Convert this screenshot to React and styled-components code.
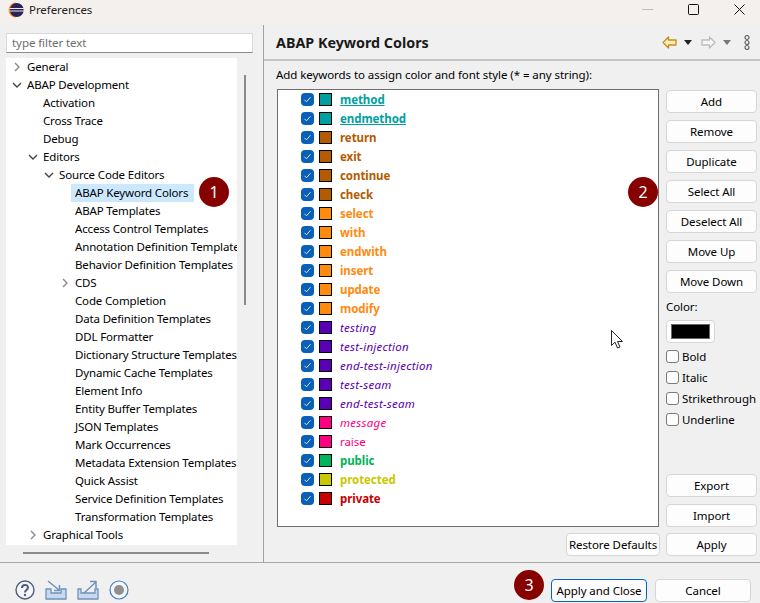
import styled, { createGlobalStyle } from "styled-components";

const GlobalStyle = createGlobalStyle`
  html, body {
    margin: 0;
    padding: 0;
    background: #f0f0f0;
  }
  * {
    box-sizing: border-box;
  }
`;

const tree = [
  { label: "General", level: 0, arrow: "closed" },
  { label: "ABAP Development", level: 0, arrow: "open" },
  { label: "Activation", level: 1 },
  { label: "Cross Trace", level: 1 },
  { label: "Debug", level: 1 },
  { label: "Editors", level: 1, arrow: "open" },
  { label: "Source Code Editors", level: 2, arrow: "open" },
  { label: "ABAP Keyword Colors", level: 3, selected: true },
  { label: "ABAP Templates", level: 3 },
  { label: "Access Control Templates", level: 3 },
  { label: "Annotation Definition Templates", level: 3 },
  { label: "Behavior Definition Templates", level: 3 },
  { label: "CDS", level: 3, arrow: "closed" },
  { label: "Code Completion", level: 3 },
  { label: "Data Definition Templates", level: 3 },
  { label: "DDL Formatter", level: 3 },
  { label: "Dictionary Structure Templates", level: 3 },
  { label: "Dynamic Cache Templates", level: 3 },
  { label: "Element Info", level: 3 },
  { label: "Entity Buffer Templates", level: 3 },
  { label: "JSON Templates", level: 3 },
  { label: "Mark Occurrences", level: 3 },
  { label: "Metadata Extension Templates", level: 3 },
  { label: "Quick Assist", level: 3 },
  { label: "Service Definition Templates", level: 3 },
  { label: "Transformation Templates", level: 3 },
  { label: "Graphical Tools", level: 1, arrow: "closed" },
];

const TEAL = "#00a0a0";
const BROWN = "#b45a00";
const ORANGE = "#ff8a10";
const PURPLE = "#5a00b4";
const PINK = "#ff0080";

const keywords = [
  { word: "method", color: TEAL, bold: true, underline: true },
  { word: "endmethod", color: TEAL, bold: true, underline: true },
  { word: "return", color: BROWN, bold: true },
  { word: "exit", color: BROWN, bold: true },
  { word: "continue", color: BROWN, bold: true },
  { word: "check", color: BROWN, bold: true },
  { word: "select", color: ORANGE, bold: true },
  { word: "with", color: ORANGE, bold: true },
  { word: "endwith", color: ORANGE, bold: true },
  { word: "insert", color: ORANGE, bold: true },
  { word: "update", color: ORANGE, bold: true },
  { word: "modify", color: ORANGE, bold: true },
  { word: "testing", color: PURPLE, italic: true },
  { word: "test-injection", color: PURPLE, italic: true },
  { word: "end-test-injection", color: PURPLE, italic: true },
  { word: "test-seam", color: PURPLE, italic: true },
  { word: "end-test-seam", color: PURPLE, italic: true },
  { word: "message", color: PINK, italic: true },
  { word: "raise", color: PINK },
  { word: "public", color: "#00b45a", bold: true },
  { word: "protected", color: "#c8c800", bold: true },
  { word: "private", color: "#c80000", bold: true },
];

const topButtons = ["Add", "Remove", "Duplicate", "Select All", "Deselect All", "Move Up", "Move Down"];
const styleOptions = ["Bold", "Italic", "Strikethrough", "Underline"];

const Window = styled.div`
  position: relative;
  width: 760px;
  height: 603px;
  overflow: hidden;
  background: #f0f0f0;
  color: #000;
  font-family: "Noto Sans", "Open Sans", sans-serif;
  font-size: 11.5px;
  letter-spacing: -0.07px;
  display: flex;
  flex-direction: column;
`;

const TitleBar = styled.div`
  height: 25px;
  flex: none;
  background: #f3f0ee;
  display: flex;
  align-items: center;
  padding: 0 0 6px 8px;
  gap: 5px;
`;

const Title = styled.span`
  flex: 1;
  color: #222;
`;

const WindowButton = styled.div`
  width: 46px;
  height: 19px;
  margin-left: -5px;
  padding-right: 15px;
  display: flex;
  align-items: center;
  justify-content: flex-end;
`;

const Body = styled.div`
  height: 537px;
  flex: none;
  display: flex;
`;

const LeftPane = styled.div`
  width: 264px;
  flex: none;
  border-right: 1px solid #a0a0a0;
  padding: 8px 0 0 6px;
`;

const FilterInput = styled.div`
  width: 247px;
  height: 20px;
  background: #fff;
  border: 1px solid #d9d9d9;
  border-bottom-color: #8a8a8a;
  color: #6d6d6d;
  line-height: 17px;
  padding-left: 5px;
`;

const TreeArea = styled.div`
  margin-top: 5px;
  display: flex;
  height: 487px;
`;

const TreeList = styled.div`
  width: 231px;
  background: #fff;
  overflow: hidden;
  letter-spacing: -0.16px;
`;

const TreeRow = styled.div`
  height: 18px;
  display: flex;
  align-items: center;
  white-space: nowrap;
  padding-left: ${(p) => 6 + p.$level * 16}px;
`;

const ArrowSlot = styled.span`
  width: 15px;
  flex: none;
  display: flex;
  align-items: center;
`;

const TreeLabel = styled.span`
  padding: 0 ${(p) => (p.$selected ? 6 : 0)}px 0 ${(p) => (p.$selected ? 4 : 0)}px;
  margin-left: ${(p) => (p.$selected ? -4 : 0)}px;
  height: 18px;
  line-height: 17px;
  background: ${(p) => (p.$selected ? "#cce8ff" : "transparent")};
`;

const VerticalTrack = styled.div`
  width: 16px;
  display: flex;
  justify-content: center;
  padding-top: 17px;
`;

const VerticalThumb = styled.div`
  width: 2px;
  height: 230px;
  background: #8a8a8a;
`;

const HorizontalTrack = styled.div`
  width: 231px;
  padding: 7px 0 0 17px;
`;

const HorizontalThumb = styled.div`
  width: 186px;
  height: 2px;
  background: #8a8a8a;
`;

const RightPane = styled.div`
  flex: 1;
  display: flex;
  flex-direction: column;
`;

const PageHeader = styled.div`
  height: 36px;
  flex: none;
  border-bottom: 2px solid #c4c4c4;
  display: flex;
  align-items: center;
  padding: 0 10px 0 12px;
`;

const PageTitle = styled.h1`
  flex: 1;
  margin: 0;
  font-size: 14.3px;
  font-weight: 700;
  letter-spacing: 0;
  color: #1a1a1a;
`;

const HeaderIcons = styled.div`
  display: flex;
  align-items: center;
  gap: 7px;
`;

const Content = styled.div`
  flex: 1;
  padding: 5px 3px 0 12px;
`;

const Hint = styled.div`
  height: 23px;
  line-height: 18px;
`;

const Columns = styled.div`
  display: flex;
  gap: 7px;
  margin-left: 1px;
`;

const KeywordTable = styled.div`
  width: 382px;
  height: 438px;
  background: #fff;
  border: 1px solid #6e6e6e;
`;

const KeywordRow = styled.div`
  height: 19px;
  display: flex;
  align-items: center;
  padding-left: 23px;
`;

const CheckMark = styled.span`
  width: 13px;
  height: 13px;
  border-radius: 4px;
  background: #0a60b8;
  display: flex;
  align-items: center;
  justify-content: center;
  flex: none;
`;

const Swatch = styled.span`
  width: 13px;
  height: 13px;
  margin-left: 5px;
  border: 1px solid #000;
  background: ${(p) => p.$color};
  flex: none;
`;

const Keyword = styled.span`
  margin-left: 8px;
  color: ${(p) => p.$color};
  font-weight: ${(p) => (p.$bold ? 700 : 400)};
  font-style: ${(p) => (p.$italic ? "italic" : "normal")};
  letter-spacing: ${(p) => (p.$italic ? "0.25px" : "inherit")};
  text-decoration: ${(p) => (p.$underline ? "underline" : "none")};
`;

const SideColumn = styled.div`
  width: 91px;
  margin-top: 1px;
  height: 437px;
  display: flex;
  flex-direction: column;
`;

const ButtonStack = styled.div`
  display: flex;
  flex-direction: column;
  gap: 7px;
`;

const PushButton = styled.button`
  height: 23px;
  width: ${(p) => (p.$width ? `${p.$width}px` : "100%")};
  background: #fdfdfd;
  border: 1px solid ${(p) => (p.$primary ? "#0067c0" : "#d6d6d6")};
  border-radius: 4px;
  font: inherit;
  letter-spacing: inherit;
  white-space: nowrap;
  color: #000;
  padding: 0;
  flex: none;
`;

const ColorLabel = styled.div`
  margin-top: 4px;
  height: 20px;
  line-height: 20px;
`;

const ColorButton = styled.div`
  width: 49px;
  height: 23px;
  margin-top: 3px;
  background: #fdfdfd;
  border: 1px solid #d6d6d6;
  border-radius: 4px;
  display: flex;
  align-items: center;
  justify-content: center;
`;

const ColorFill = styled.div`
  width: 39px;
  height: 15px;
  background: #000;
  border: 1px solid #666;
`;

const OptionList = styled.div`
  margin-top: 3px;
  display: flex;
  flex-direction: column;
`;

const OptionRow = styled.div`
  height: 21px;
  display: flex;
  align-items: center;
  gap: 3px;
`;

const OptionBox = styled.span`
  width: 13px;
  height: 13px;
  background: #fdfdfd;
  border: 1px solid #7a7a7a;
  border-radius: 3px;
  flex: none;
`;

const BottomButtons = styled.div`
  margin-top: auto;
  display: flex;
  flex-direction: column;
  gap: 7px;
`;

const RestoreRow = styled.div`
  margin-top: 6px;
  display: flex;
  justify-content: flex-end;
  align-items: center;
  gap: 6px;
`;

const Footer = styled.div`
  flex: 1;
  border-top: 1px solid #a8a8a8;
  display: flex;
  align-items: center;
  padding: 14px 9px 0 15px;
`;

const FooterIcons = styled.div`
  flex: 1;
  display: flex;
  align-items: center;
  gap: 10px;
`;

const FooterButtons = styled.div`
  display: flex;
  gap: 8px;
`;

const Badge = styled.div`
  position: absolute;
  left: ${(p) => p.$x}px;
  top: ${(p) => p.$y}px;
  width: 30px;
  height: 30px;
  border-radius: 50%;
  background: #870000;
  color: #fff;
  font-size: 16px;
  display: flex;
  align-items: center;
  justify-content: center;
`;

const CursorLayer = styled.svg`
  position: absolute;
  left: 611px;
  top: 330px;
`;

function Chevron({ open }) {
  return (
    <svg width="10" height="10" viewBox="0 0 10 10" fill="none" stroke={open ? "#444" : "#8a8a8a"} strokeWidth="1.4">
      <path d={open ? "M1 3l4 4 4-4" : "M3 1l4 4-4 4"} />
    </svg>
  );
}

function EclipseLogo() {
  return (
    <svg width="16" height="16" viewBox="0 0 16 16">
      <path d="M8 .5A7.500 7.500 0 0 0 8 15.500z" fill="#f7941e" />
      <circle cx="8.800" cy="8" r="6.900" fill="#2c2255" />
      <path d="M1.500 6.500h14.500M1.500 9h14.500" stroke="#e8e6f2" strokeWidth="1.200" />
    </svg>
  );
}

function Tick() {
  return (
    <svg width="9" height="9" viewBox="0 0 9 9" fill="none" stroke="#cfe3f7" strokeWidth="1">
      <path d="M1.500 4.800l2 2 4-4.600" />
    </svg>
  );
}

function App() {
  return (
    <Window>
      <GlobalStyle />
      <TitleBar>
        <EclipseLogo />
        <Title>Preferences</Title>
        <WindowButton>
          <svg width="11" height="2"><path d="M0 .5h11" stroke="#bdbdbd" /></svg>
        </WindowButton>
        <WindowButton>
          <svg width="11" height="11"><rect x=".5" y=".5" width="10" height="10" rx="1" fill="none" stroke="#111" /></svg>
        </WindowButton>
        <WindowButton>
          <svg width="11" height="11"><path d="M.5.5l10 10M10.500.5l-10 10" stroke="#111" /></svg>
        </WindowButton>
      </TitleBar>

      <Body>
        <LeftPane>
          <FilterInput>type filter text</FilterInput>
          <TreeArea>
            <TreeList>
              {tree.map((item) => (
                <TreeRow key={item.label} $level={item.level}>
                  <ArrowSlot>{item.arrow && <Chevron open={item.arrow === "open"} />}</ArrowSlot>
                  <TreeLabel $selected={item.selected}>{item.label}</TreeLabel>
                </TreeRow>
              ))}
            </TreeList>
            <VerticalTrack>
              <VerticalThumb />
            </VerticalTrack>
          </TreeArea>
          <HorizontalTrack>
            <HorizontalThumb />
          </HorizontalTrack>
        </LeftPane>

        <RightPane>
          <PageHeader>
            <PageTitle>ABAP Keyword Colors</PageTitle>
            <HeaderIcons>
              <svg width="15" height="13" viewBox="0 0 15 13">
                <path d="M1 6.500L6.500 1v3h7.500v5H6.500v3z" fill="#fdeeb5" stroke="#c98a1c" strokeWidth="1.300" strokeLinejoin="round" />
              </svg>
              <svg width="8" height="5"><path d="M0 0h8L4 5z" fill="#222" /></svg>
              <svg width="15" height="13" viewBox="0 0 15 13" style={{ marginLeft: 2 }}>
                <path d="M14 6.500L8.500 1v3H1v5h7.500v3z" fill="#f6f6f6" stroke="#bcbcbc" strokeWidth="1.300" strokeLinejoin="round" />
              </svg>
              <svg width="8" height="5"><path d="M0 0h8L4 5z" fill="#777" /></svg>
              <svg width="6" height="15" viewBox="0 0 6 15" fill="none" stroke="#666" strokeWidth="1.200" style={{ marginLeft: 6 }}>
                <circle cx="3" cy="2.500" r="2" />
                <circle cx="3" cy="7.500" r="2" />
                <circle cx="3" cy="12.500" r="2" />
              </svg>
            </HeaderIcons>
          </PageHeader>

          <Content>
            <Hint>Add keywords to assign color and font style (* = any string):</Hint>
            <Columns>
              <KeywordTable>
                {keywords.map((k) => (
                  <KeywordRow key={k.word}>
                    <CheckMark><Tick /></CheckMark>
                    <Swatch $color={k.color} />
                    <Keyword $color={k.color} $bold={k.bold} $italic={k.italic} $underline={k.underline}>
                      {k.word}
                    </Keyword>
                  </KeywordRow>
                ))}
              </KeywordTable>
              <SideColumn>
                <ButtonStack>
                  {topButtons.map((b) => (
                    <PushButton key={b}>{b}</PushButton>
                  ))}
                </ButtonStack>
                <ColorLabel>Color:</ColorLabel>
                <ColorButton><ColorFill /></ColorButton>
                <OptionList>
                  {styleOptions.map((o) => (
                    <OptionRow key={o}>
                      <OptionBox />
                      {o}
                    </OptionRow>
                  ))}
                </OptionList>
                <BottomButtons>
                  <PushButton>Export</PushButton>
                  <PushButton>Import</PushButton>
                </BottomButtons>
              </SideColumn>
            </Columns>
            <RestoreRow>
              <PushButton $width={94}>Restore Defaults</PushButton>
              <PushButton $width={91}>Apply</PushButton>
            </RestoreRow>
          </Content>
        </RightPane>
      </Body>

      <Footer>
        <FooterIcons>
          <svg width="20" height="20" viewBox="0 0 20 20">
            <circle cx="10" cy="10" r="9" fill="#f4f6fa" stroke="#4f5d7c" strokeWidth="1.400" />
            <path d="M7 8c0-4 6-4 6-.5 0 2.500-3 2.500-3 5" fill="none" stroke="#4f5d7c" strokeWidth="2" />
            <circle cx="10" cy="15" r="1.200" fill="#4f5d7c" />
          </svg>
          <svg width="22" height="20" viewBox="0 0 22 20" fill="none" stroke="#6e93bf" strokeWidth="1.300">
            <path d="M1 9v10h20V9h-5v4H6V9z" fill="#c8d9ee" />
            <path d="M3 1l11 9M9 10.500h5.500V5" strokeWidth="1.500" />
          </svg>
          <svg width="22" height="20" viewBox="0 0 22 20" fill="none" stroke="#6e93bf" strokeWidth="1.300">
            <path d="M1 9v10h20V9h-3v4H4V9z" fill="#c8d9ee" />
            <path d="M7 13L19 2M13 1.500h6V8" strokeWidth="1.500" />
          </svg>
          <svg width="20" height="20" viewBox="0 0 20 20">
            <circle cx="10" cy="10" r="9" fill="#f4f6fa" stroke="#3f7fb8" strokeWidth="1.200" />
            <circle cx="10" cy="10" r="5" fill="#8f8f8f" />
          </svg>
        </FooterIcons>
        <FooterButtons>
          <PushButton $width={96} $primary>Apply and Close</PushButton>
          <PushButton $width={96}>Cancel</PushButton>
        </FooterButtons>
      </Footer>

      <Badge $x={199} $y={177}>1</Badge>
      <Badge $x={628} $y={177}>2</Badge>
      <Badge $x={514} $y={570}>3</Badge>
      <CursorLayer width="13" height="19" viewBox="0 0 13 19">
        <path d="M.5.5v15l3.500-3.300 2.500 5.800 2.500-1-2.500-5.500h5z" fill="#fff" stroke="#222" />
      </CursorLayer>
    </Window>
  );
}

export default App;
